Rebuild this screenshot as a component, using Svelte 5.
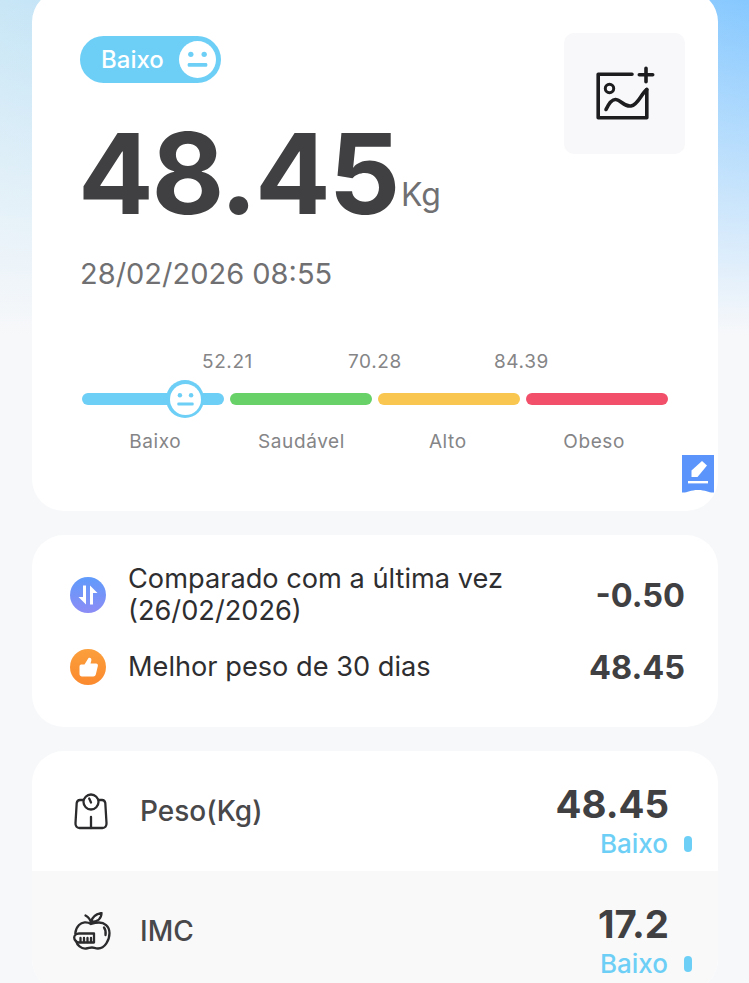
<script>
  const stops = ['52.21', '70.28', '84.39'];
  const segments = [
    { name: 'Baixo', color: '#6dcff6' },
    { name: 'Saudável', color: '#68d168' },
    { name: 'Alto', color: '#f9c74f' },
    { name: 'Obeso', color: '#f2506a' }
  ];
  const rows = [
    { label: 'Peso(Kg)', value: '48.45', icon: 'scale' },
    { label: 'IMC', value: '17.2', icon: 'apple' }
  ];
</script>

{#snippet face(fg, size)}
  <svg width={size} height={size} viewBox="0 0 36 36">
    <circle cx="18" cy="18" r="18" fill="#fff" />
    <circle cx="11.5" cy="13" r="2.6" fill={fg} />
    <circle cx="24.5" cy="13" r="2.6" fill={fg} />
    <rect x="8.5" y="21.5" width="19" height="3.6" rx="1.2" fill={fg} />
  </svg>
{/snippet}

<div class="page">
  <section class="card main">
    <div class="top">
      <div>
        <div class="badge"><span>Baixo</span>{@render face('#6dcff6', 37)}</div>
        <div class="weight"><span class="num">48.45</span><span class="unit">Kg</span></div>
        <div class="date">28/02/2026 08:55</div>
      </div>
      <button class="photo" aria-label="Adicionar foto">
        <svg width="60" height="56" viewBox="0 0 60 56" fill="none" stroke="#1d1d1f" stroke-width="3.6" stroke-linecap="round" stroke-linejoin="round">
          <path d="M37 8.200H3.200V51.800H51.800V23.500"/>
          <circle cx="14.500" cy="22.500" r="4.200" stroke-width="3"/>
          <path d="M11 43.500C14 37 17 33 21 33.500C26 34 29 41 36 40C43 39 46 28 51.800 23.500"/>
          <path d="M44.300 8.800H57.700M51 2.300V15.700"/>
        </svg>
      </button>
    </div>

    <div class="scale">
      <div class="stops">
        {#each stops as s}<span>{s}</span>{/each}
      </div>
      <div class="bar">
        {#each segments as seg}
          <i style="background:{seg.color}"></i>
        {/each}
        <div class="thumb">{@render face('#6dcff6', 31)}</div>
      </div>
      <div class="names">
        {#each segments as seg}<span>{seg.name}</span>{/each}
      </div>
    </div>

    <div class="tag">
      <svg width="32" height="38" viewBox="0 0 32 38">
        <path d="M0 0H32V37.500C27 38 24 35 16 35S5 38 0 37.500Z" fill="#5b95fb"/>
        <path d="M9.500 22V15.500L20 6L25 10.500L15.500 22Z" fill="#fff"/>
        <rect x="6" y="26" width="20" height="2.400" fill="#fff"/>
      </svg>
    </div>
  </section>

  <section class="card compare">
    <div class="line">
      <svg class="round" width="36" height="36" viewBox="0 0 36 36">
        <defs><linearGradient id="blue" x1="0" y1="0" x2="0" y2="1"><stop offset="0" stop-color="#5f9bfb"/><stop offset="1" stop-color="#8c8cf5"/></linearGradient></defs>
        <circle cx="18" cy="18" r="18" fill="url(#blue)"/>
        <path d="M16 8.500V27.500L8.500 20H13V8.500ZM20 27.500V8.500L27.500 16H23V27.500Z" fill="#fff"/>
      </svg>
      <p>Comparado com a última vez<br />(26/02/2026)</p>
      <b>-0.50</b>
    </div>
    <div class="line">
      <svg class="round" width="36" height="36" viewBox="0 0 36 36">
        <defs><linearGradient id="orange" x1="0" y1="0" x2="0" y2="1"><stop offset="0" stop-color="#fb9f3c"/><stop offset="1" stop-color="#fb8a2e"/></linearGradient></defs>
        <circle cx="18" cy="18" r="18" fill="url(#orange)"/>
        <path d="M9.500 17.500C9.500 16 10.500 15.500 12 15.500H14.500L18.500 9C20.500 8.300 21.800 9.800 21.300 11.800L20.500 14.500H26C27.500 14.500 28.200 15.800 27.800 17.300L25.800 25.500C25.500 26.800 24.500 27.500 23.300 27.500H12C10.500 27.500 9.500 26.500 9.500 25Z" fill="#fff"/>
      </svg>
      <p>Melhor peso de 30 dias</p>
      <b>48.45</b>
    </div>
  </section>

  <section class="card metrics">
    {#each rows as row}
      <div class="metric">
        <span class="glyph">
          {#if row.icon === 'scale'}
            <svg width="36" height="38" viewBox="0 0 36 38" fill="none" stroke="#2b2b2d" stroke-width="2.300" stroke-linecap="round" stroke-linejoin="round">
              <path d="M10.500 8H7C5 8 4 9.500 3.700 11L2.500 31C2.300 34 3.800 36 6.500 36H29.500C32.200 36 33.700 34 33.500 31L32.300 11C32 9.500 31 8 29 8H25.500"/>
              <circle cx="18" cy="10" r="7.500"/>
              <path d="M18 10.500L16.200 6.500"/>
              <path d="M18 36V25"/>
            </svg>
          {:else}
            <svg width="38" height="38" viewBox="0 0 38 38" fill="none" stroke="#2b2b2d" stroke-width="2.300" stroke-linecap="round" stroke-linejoin="round">
              <path d="M3 29C4 33 8 37 13 36.500C15.500 36.300 17 35.500 19 35.500C21 35.500 22 36.500 25 36.500C32 36.500 36.500 28 36.500 21C36.500 14 31 10.500 26 10.500C23 10.500 21 11 18 12C14 9.500 9 10 6 13C3.500 15.500 2.500 18 2.300 21.500"/>
              <path d="M21 21.500H6C3 21.500 1.200 23.500 1.200 25.500C1.200 27.500 3 30.500 6 30.500H21Z"/>
              <path d="M7.500 26V30M11 26V30M14.500 26V30M18 26V30"/>
              <path d="M18 10C19 5 23 2 28.500 1C28.500 6 25 10 18 10"/>
              <path d="M12.500 3.500C15.500 5 17.500 8 18 11"/>
              <path d="M31 15.500C32.500 17.500 33 20 32.500 23"/>
            </svg>
          {/if}
        </span>
        <span class="label">{row.label}</span>
        <span class="vals">
          <b>{row.value}</b>
          <small>Baixo<i></i></small>
        </span>
      </div>
    {/each}
  </section>
</div>

<style>
  :global(body) {
    margin: 0;
    background: #f7f8fa;
    font-family: Inter, "Liberation Sans", sans-serif;
    overflow: hidden;
  }
  .page {
    height: 983px;
    box-sizing: border-box;
    padding: 0 31px 0 32px;
    overflow: hidden;
    display: flex;
    flex-direction: column;
    gap: 24px;
    background:
      linear-gradient(180deg, rgba(247, 248, 250, 0) 0, #f7f8fa 335px) no-repeat,
      linear-gradient(90deg, #c8e6f6 0, #a9d8fb 60%, #86c8ff 100%);
  }
  .card {
    background: #fff;
    border-radius: 32px;
    flex: none;
  }
  .main {
    position: relative;
    height: 521px;
    margin-top: -10px;
    box-sizing: border-box;
    padding: 46px 33px 0 48px;
  }
  .top {
    display: flex;
    justify-content: space-between;
    align-items: flex-start;
  }
  .badge {
    width: 141px;
    height: 47px;
    box-sizing: border-box;
    border-radius: 24px;
    background: #6dcff6;
    color: #fff;
    font-size: 24px;
    font-weight: 500;
    display: flex;
    align-items: center;
    justify-content: space-between;
    padding: 0 5px 0 21px;
  }
  .weight {
    display: flex;
    align-items: flex-end;
    margin: 34px 0 0 -2px;
    height: 112px;
    color: #404042;
  }
  .num {
    font-size: 112px;
    line-height: 112px;
    font-weight: 700;
    letter-spacing: -2.200px;
  }
  .unit {
    font-size: 32px;
    color: #707072;
    line-height: 32px;
    margin: 0 0 18px 3px;
  }
  .date {
    margin-top: 27px;
    font-size: 29px;
    line-height: 36px;
    color: #707072;
  }
  .photo {
    all: unset;
    width: 121px;
    height: 121px;
    margin-top: -3px;
    background: #f8f8fa;
    border-radius: 10px;
    display: flex;
    align-items: center;
    justify-content: center;
  }
  .scale {
    margin-top: 58px;
    width: 586px;
    margin-left: 2px;
    color: #858587;
    font-size: 19px;
  }
  .stops {
    display: grid;
    grid-template-columns: 146px 146px 146px;
    padding-left: 120px;
    text-align: left;
    line-height: 24px;
    height: 24px;
    letter-spacing: 0.600px;
  }
  .bar {
    position: relative;
    display: grid;
    grid-template-columns: 142px 142px 142px 142px;
    gap: 6px;
    margin-top: 19px;
  }
  .bar i {
    height: 12px;
    border-radius: 6px;
  }
  .thumb {
    position: absolute;
    left: 84px;
    top: -13px;
    width: 38px;
    height: 38px;
    border-radius: 50%;
    background: #6dcff6;
    display: flex;
    align-items: center;
    justify-content: center;
  }
  .names {
    display: grid;
    grid-template-columns: repeat(4, 146.330px);
    text-align: center;
    margin-top: 25px;
    line-height: 24px;
    letter-spacing: 0.600px;
  }
  .tag {
    position: absolute;
    right: 4px;
    bottom: 18px;
    height: 38px;
  }
  .compare {
    height: 192px;
    box-sizing: border-box;
    padding: 27px 33px 0 38px;
    color: #2e2e30;
  }
  .line {
    display: flex;
    align-items: center;
    min-height: 66px;
  }
  .line + .line {
    margin-top: 17px;
    min-height: 44px;
  }
  .round {
    flex: none;
  }
  .line p {
    margin: 0 0 0 22px;
    flex: 1;
    font-size: 27.200px;
    line-height: 32px;
  }
  .line b {
    font-size: 32.500px;
    color: #404042;
    font-weight: 700;
  }
  .metrics {
    overflow: hidden;
  }
  .metric {
    height: 120px;
    display: flex;
    align-items: center;
    box-sizing: border-box;
    padding: 0 26px 0 41px;
  }
  .metric:nth-child(even) {
    background: #f9f9fa;
  }
  .glyph {
    width: 67px;
    display: flex;
  }
  .label {
    flex: 1;
    font-size: 28px;
    font-weight: 500;
    color: #48484a;
  }
  .vals {
    display: flex;
    flex-direction: column;
    align-items: flex-end;
    padding-top: 17px;
  }
  .vals b {
    font-size: 38.400px;
    line-height: 46px;
    font-weight: 700;
    color: #404042;
    margin-right: 23px;
  }
  .vals small {
    margin-top: 2px;
    font-size: 26px;
    line-height: 30px;
    color: #6dcff6;
    font-weight: 500;
    display: flex;
    align-items: center;
  }
  .vals small i {
    width: 8px;
    height: 16px;
    border-radius: 4px;
    background: #6dcff6;
    margin-left: 16px;
  }
</style>
